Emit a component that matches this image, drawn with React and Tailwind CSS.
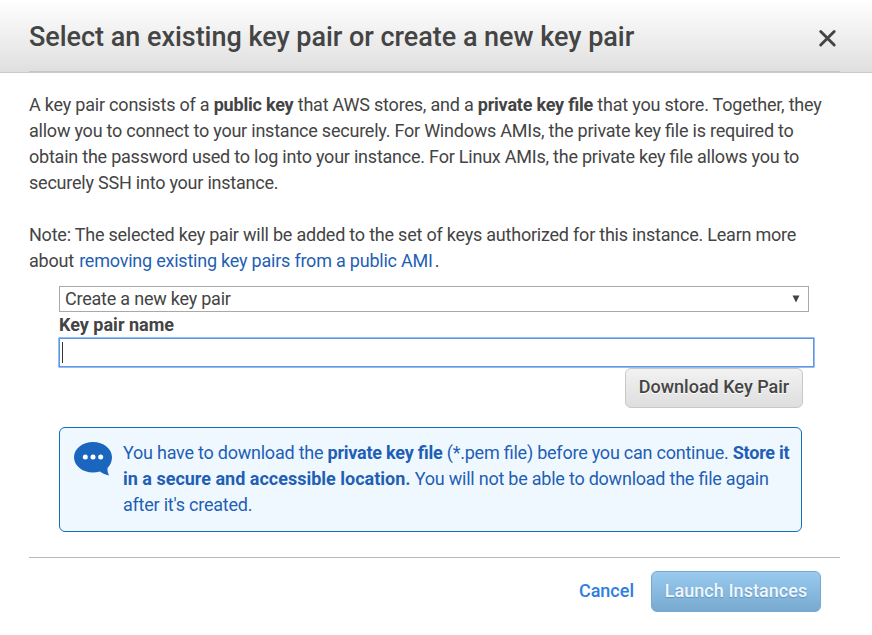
function SpeechBubble() {
  return (
    <svg width="40" height="36" viewBox="0 0 40 36" className="mt-px shrink-0" aria-hidden="true">
      <path
        d="M20 1C9.500 1 1 7.800 1 16.300S9.500 31.500 20 31.500c2.400 0 4.700-.4 6.800-1 2.700 2 5.800 3.300 9.300 4-1.300-2.600-1.800-5.100-1.600-7.500C37.300 24.300 39 20.500 39 16.300 39 7.800 30.500 1 20 1Z"
        fill="#1a66bf"
      />
      <circle cx="12.300" cy="16" r="2.500" fill="#fff" />
      <circle cx="20" cy="16" r="2.500" fill="#fff" />
      <circle cx="27.700" cy="16" r="2.500" fill="#fff" />
    </svg>
  );
}

export default function App() {
  return (
    <div className="flex h-[635px] w-[872px] flex-col overflow-hidden bg-white font-[Roboto,sans-serif] text-[18px] leading-[26px] text-[#444] [font-feature-settings:'liga']">
      <header className="flex h-[73px] shrink-0 flex-col border-b border-[#cacaca] bg-linear-to-b from-white to-[#dfdfdf] px-[29px]">
        <div className="flex h-[71px] items-center justify-between pt-[3px]">
          <h1 className="text-[27px] font-medium leading-[32px] tracking-[-0.03px] whitespace-nowrap">
            Select an existing key pair or create a new key pair
          </h1>
          <svg width="20" height="20" viewBox="0 0 20 20" className="mr-[6px] mt-[2px]" aria-label="Close">
            <path d="M3.700 3.500L17.200 17M17.200 3.500L3.700 17" stroke="#444" strokeWidth="2.900" strokeLinecap="round" />
          </svg>
        </div>
        <div className="mr-[3px] h-px shrink-0 bg-[#c6c6c6]" />
      </header>

      <main className="px-[29px] pt-[19px]">
        <p className="tracking-[-0.225px] whitespace-nowrap">
          <span className="block tracking-[-0.208px]">A key pair consists of a <b>public key</b> that AWS stores, and a <b>private key file</b> that you store. Together, they</span>
          <span className="block">allow you to connect to your instance securely. For Windows AMIs, the private key file is required to</span>
          <span className="block">obtain the password used to log into your instance. For Linux AMIs, the private key file allows you to</span>
          <span className="block">securely SSH into your instance.</span>
        </p>
        <p className="mt-[26px] tracking-[-0.22px] whitespace-nowrap">
          <span className="block">Note: The selected key pair will be added to the set of keys authorized for this instance. Learn more</span>
          <span className="block">about <a className="ml-[1px] text-[#1f5fb5]">removing existing key pairs from a public AMI</a><span className="ml-[2px]">.</span></span>
        </p>

        <div className="ml-[30px] mt-[12px] flex flex-col items-start">
          <div className="flex h-[26px] w-[750px] items-center justify-between border border-[#a9a9a9] pl-[5px] pr-[8px]">
            <span className="tracking-[-0.22px]">Create a new key pair</span>
            <svg width="8" height="8" viewBox="0 0 8 8" aria-hidden="true">
              <path d="M.5 .5H7.500L4 7.500Z" fill="#444" />
            </svg>
          </div>
          <label className="h-[26px] font-bold">Key pair name</label>
          <div className="-ml-px -mt-px flex h-[31px] w-[757px] items-center rounded-[1px] border border-[#8fbdff] bg-white">
            <div className="flex h-[29px] w-full items-center border border-[#6694da] pl-[2px]">
              <span className="h-[21px] w-px bg-[#333]" />
            </div>
          </div>
          <button className="ml-[566px] flex h-[40px] w-[178px] items-center justify-center rounded-[6px] border border-[#c8c8c8] bg-linear-to-b from-[#f2f2f2] to-[#dedede] pb-[2px] font-medium whitespace-nowrap [text-shadow:0_1px_0_#fff]">
            Download Key Pair
          </button>
          <section className="mt-[19px] flex h-[105px] w-[743px] rounded-[6px] border border-[#146eb4] bg-[#f0f8ff] pl-[13px] pt-[12px] text-[#1f5fb5]">
            <SpeechBubble />
            <p className="ml-[10px] tracking-[-0.23px] whitespace-nowrap">
              <span className="block">You have to download the <b>private key file</b> (*.pem file) before you can continue. <b>Store it</b></span>
              <span className="block"><b className="tracking-normal">in a secure and accessible location.</b> You will not be able to download the file again</span>
              <span className="block">after it's created.</span>
            </p>
          </section>
        </div>
      </main>

      <footer className="mx-[29px] mr-[32px] mt-[25px] flex items-start justify-end border-t border-[#b8b8b8] pt-[13px] pr-[19px]">
        <button className="mt-[7px] mr-[17px] font-medium text-[#2e7de1]">Cancel</button>
        <button className="flex h-[41px] w-[170px] items-center justify-center rounded-[6px] border border-[#75a9d1] bg-linear-to-b from-[#99caef] to-[#78a9cf] pb-[2px] font-medium tracking-[0.06px] whitespace-nowrap text-[#eef7ff] [text-shadow:0_1px_1px_#6292b8]">
          Launch Instances
        </button>
      </footer>
    </div>
  );
}
